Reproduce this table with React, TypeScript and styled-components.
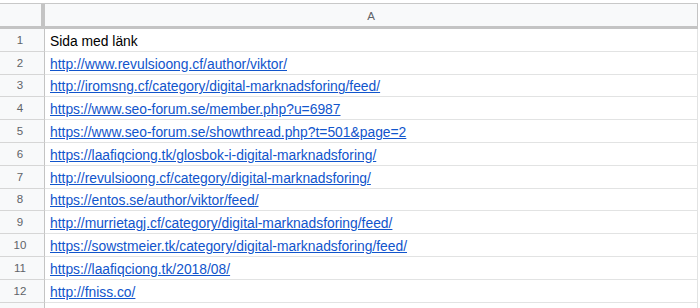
import React from "react";
import styled, { createGlobalStyle } from "styled-components";

const Global = createGlobalStyle`
  html, body { margin: 0; padding: 0; background: #ffffff; }
  body { font-family: Arial, "Liberation Sans", Helvetica, sans-serif; overflow: hidden; }
`;

const Sheet = styled.div`
  padding-top: 3px;
  width: 698px;
`;

const HeaderRow = styled.div`
  display: flex;
  height: 26px;
  box-sizing: border-box;
  border-top: 1px solid #c8c8c8;
  border-bottom: 3px solid #c4c4c4;
  background: #f8f9fa;
`;

const Corner = styled.div`
  width: 45px;
  flex: none;
  box-sizing: border-box;
  border-right: 4px solid #c4c4c4;
  background: #f8f9fa;
`;

const ColHeader = styled.div`
  flex: 1;
  display: flex;
  align-items: center;
  justify-content: center;
  box-sizing: border-box;
  border-right: 1px solid #c4c4c4;
  font-size: 11.5px;
  color: #5f6368;
  padding-top: 2px;
`;

const Row = styled.div`
  display: flex;
  height: 22.8px;
  box-sizing: border-box;
  border-bottom: 1px solid #e2e3e3;
`;

const RowNum = styled.div`
  width: 45px;
  flex: none;
  box-sizing: border-box;
  border-right: 1px solid #c4c4c4;
  background: #f8f9fa;
  display: flex;
  align-items: center;
  justify-content: center;
  font-size: 11.5px;
  color: #5f6368;
  padding-right: 4px;
  margin-bottom: -1px;
  border-bottom: 1px solid #d6d6d6;
`;

const Cell = styled.div`
  flex: 1;
  box-sizing: border-box;
  border-right: 1px solid #e2e3e3;
  display: flex;
  align-items: center;
  padding: 2px 0 0 5px;
  font-size: 13.85px;
  color: #000000;
  white-space: nowrap;
  overflow: hidden;
`;

const Link = styled.a`
  color: #1155cc;
  text-decoration: underline;
`;

const rows: string[] = [
  "http://www.revulsioong.cf/author/viktor/",
  "http://iromsng.cf/category/digital-marknadsforing/feed/",
  "https://www.seo-forum.se/member.php?u=6987",
  "https://www.seo-forum.se/showthread.php?t=501&page=2",
  "https://laafiqciong.tk/glosbok-i-digital-marknadsforing/",
  "http://revulsioong.cf/category/digital-marknadsforing/",
  "https://entos.se/author/viktor/feed/",
  "http://murrietagj.cf/category/digital-marknadsforing/feed/",
  "https://sowstmeier.tk/category/digital-marknadsforing/feed/",
  "https://laafiqciong.tk/2018/08/",
  "http://fniss.co/",
];

export default function App() {
  return (
    <>
      <Global />
      <Sheet>
        <HeaderRow>
          <Corner />
          <ColHeader>A</ColHeader>
        </HeaderRow>
        <Row>
          <RowNum>1</RowNum>
          <Cell>Sida med länk</Cell>
        </Row>
        {rows.map((u, i) => (
          <Row key={i}>
            <RowNum>{i + 2}</RowNum>
            <Cell>
              <Link href="#">{u}</Link>
            </Cell>
          </Row>
        ))}
        <Row>
          <RowNum />
          <Cell />
        </Row>
      </Sheet>
    </>
  );
}
